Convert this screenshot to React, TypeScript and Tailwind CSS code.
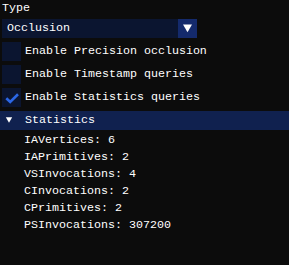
import React from 'react';

const STATS = [
  { name: 'IAVertices', value: '6' },
  { name: 'IAPrimitives', value: '2' },
  { name: 'VSInvocations', value: '4' },
  { name: 'CInvocations', value: '2' },
  { name: 'CPrimitives', value: '2' },
  { name: 'PSInvocations', value: '307200' },
];

const OPTIONS = [
  { label: 'Enable Precision occlusion', checked: false },
  { label: 'Enable Timestamp queries', checked: false },
  { label: 'Enable Statistics queries', checked: true },
];

const Checkbox: React.FC<{ label: string; checked: boolean }> = ({ label, checked }) => (
  <div className="flex items-center gap-[4px] h-[19px] pl-[2px]">
    <div className="w-[19px] h-[19px] bg-[#0b1530] shrink-0">
      {checked && (
        <svg width="19" height="19" viewBox="0 0 19 19">
          <polyline
            points="4.3,10.2 8.2,14 16,6.3"
            fill="none"
            stroke="#2b67e6"
            strokeWidth="2.6"
          />
        </svg>
      )}
    </div>
    <span>{label}</span>
  </div>
);

export default function App() {
  return (
    <div
      className="w-[289px] h-[265px] bg-[#0c0c0c] text-white text-[11.67px] leading-[13px] pt-[2px] flex flex-col gap-[4px] overflow-hidden"
      style={{ fontFamily: '"Liberation Mono", "DejaVu Sans Mono", monospace' }}
    >
      <div className="h-[13px] pl-[2px]">Type</div>

      <div className="ml-[2px] w-[195px] h-[19px] flex">
        <div className="flex-1 bg-[#0b1530] pl-[5px] flex items-center">Occlusion</div>
        <div className="w-[19px] h-[19px] bg-[#142a6c]">
          <svg width="19" height="19" viewBox="0 0 19 19">
            <polygon points="5,5.6 14,5.6 9.5,13.2" fill="#ffffff" />
          </svg>
        </div>
      </div>

      {OPTIONS.map((o) => (
        <Checkbox key={o.label} label={o.label} checked={o.checked} />
      ))}

      <div className="h-[19px] bg-[#10214f] flex items-center">
        <svg width="25" height="19" viewBox="0 0 25 19" className="shrink-0">
          <polygon points="5.8,6.3 12.2,6.3 9,11.8" fill="#ffffff" />
        </svg>
        <span>Statistics</span>
      </div>

      {STATS.map((s) => (
        <div key={s.name} className="h-[13px] pl-[24px]">
          {s.name}: {s.value}
        </div>
      ))}
    </div>
  );
}
